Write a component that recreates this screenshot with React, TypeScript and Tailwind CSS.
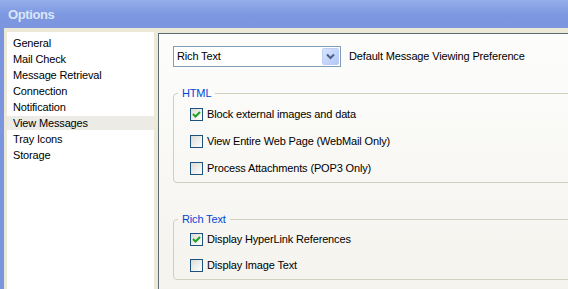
import React from "react";

const menu = [
  "General",
  "Mail Check",
  "Message Retrieval",
  "Connection",
  "Notification",
  "View Messages",
  "Tray Icons",
  "Storage",
];

function Check({ checked, label }: { checked?: boolean; label: string }) {
  return (
    <div className="flex items-center h-[13px]">
      <span className="w-[13px] h-[13px] border border-[#1c5180] bg-gradient-to-br from-[#dcdcd5] to-white flex items-center justify-center shrink-0">
        {checked && (
          <svg width="9" height="9" viewBox="0 0 9 9">
            <path
              d="M1 4 L3.5 6.5 L8 2"
              fill="none"
              stroke="#21a121"
              strokeWidth="2"
            />
          </svg>
        )}
      </span>
      <span className="ml-[4px] whitespace-nowrap">{label}</span>
    </div>
  );
}

function Group({
  title,
  children,
}: {
  title: string;
  children: React.ReactNode;
}) {
  return (
    <fieldset className="border border-[#d0d0bf] rounded-[4px] w-[520px] ml-[14px] pl-[16px] pt-[8px]">
      <legend className="-ml-[12px] px-[4px] text-[#0046d5] leading-[13px]">
        {title}
      </legend>
      {children}
    </fieldset>
  );
}

export default function App() {
  return (
    <div
      className="w-[568px] h-[289px] overflow-hidden flex flex-col bg-[#ece9d8] text-[11px] text-black tracking-[-0.15px]"
      style={{ fontFamily: '"Liberation Sans", Arial, sans-serif' }}
    >
      <div className="h-[28px] shrink-0 bg-gradient-to-b from-[#94aeea] via-[#7d98e0] to-[#7b96df] flex items-center pl-[8px] pt-[2px]">
        <span className="text-[13px] font-bold text-[#dbe5f9] tracking-[-0.4px]">
          Options
        </span>
      </div>
      <div className="flex-1 flex border-l-4 border-[#7b96df] pt-[4px] min-h-0">
        <div className="w-[147px] ml-[3px] bg-white pt-[3px] shrink-0">
          {menu.map((m) => (
            <div
              key={m}
              className={
                m === "View Messages"
                  ? "h-[14px] my-px flex items-center pl-[6px] bg-[#ecebe5]"
                  : "h-[16px] flex items-center pl-[6px]"
              }
            >
              {m}
            </div>
          ))}
        </div>
        <div className="flex-1 ml-[4px] mt-[1px] border-l border-t border-[#5d6a72] bg-gradient-to-b from-[#fdfdfc] to-[#f4f3ee] overflow-hidden">
          <div className="flex items-center pl-[14px] pt-[12px]">
            <div className="w-[168px] h-[21px] border border-[#7f9db9] bg-white flex items-center justify-between pl-[3px] pr-px">
              <span>Rich Text</span>
              <span className="w-[17px] h-[17px] rounded-[2px] border border-[#bccdf6] bg-gradient-to-br from-[#d8e4fe] to-[#b3c8f7] flex items-center justify-center">
                <svg width="9" height="7" viewBox="0 0 9 7">
                  <path
                    d="M1 1.5 L4.5 5 L8 1.5"
                    fill="none"
                    stroke="#4d6185"
                    strokeWidth="2"
                  />
                </svg>
              </span>
            </div>
            <span className="ml-[8px]">Default Message Viewing Preference</span>
          </div>
          <div className="mt-[20px]">
            <Group title="HTML">
              <div className="flex flex-col gap-[14px] pb-[7px]">
                <Check checked label="Block external images and data" />
                <Check label="View Entire Web Page (WebMail Only)" />
                <Check label="Process Attachments (POP3 Only)" />
              </div>
            </Group>
          </div>
          <div className="mt-[30px]">
            <Group title="Rich Text">
              <div className="flex flex-col gap-[13px] pb-[7px] -mt-px">
                <Check checked label="Display HyperLink References" />
                <Check label="Display Image Text" />
              </div>
            </Group>
          </div>
        </div>
      </div>
    </div>
  );
}
